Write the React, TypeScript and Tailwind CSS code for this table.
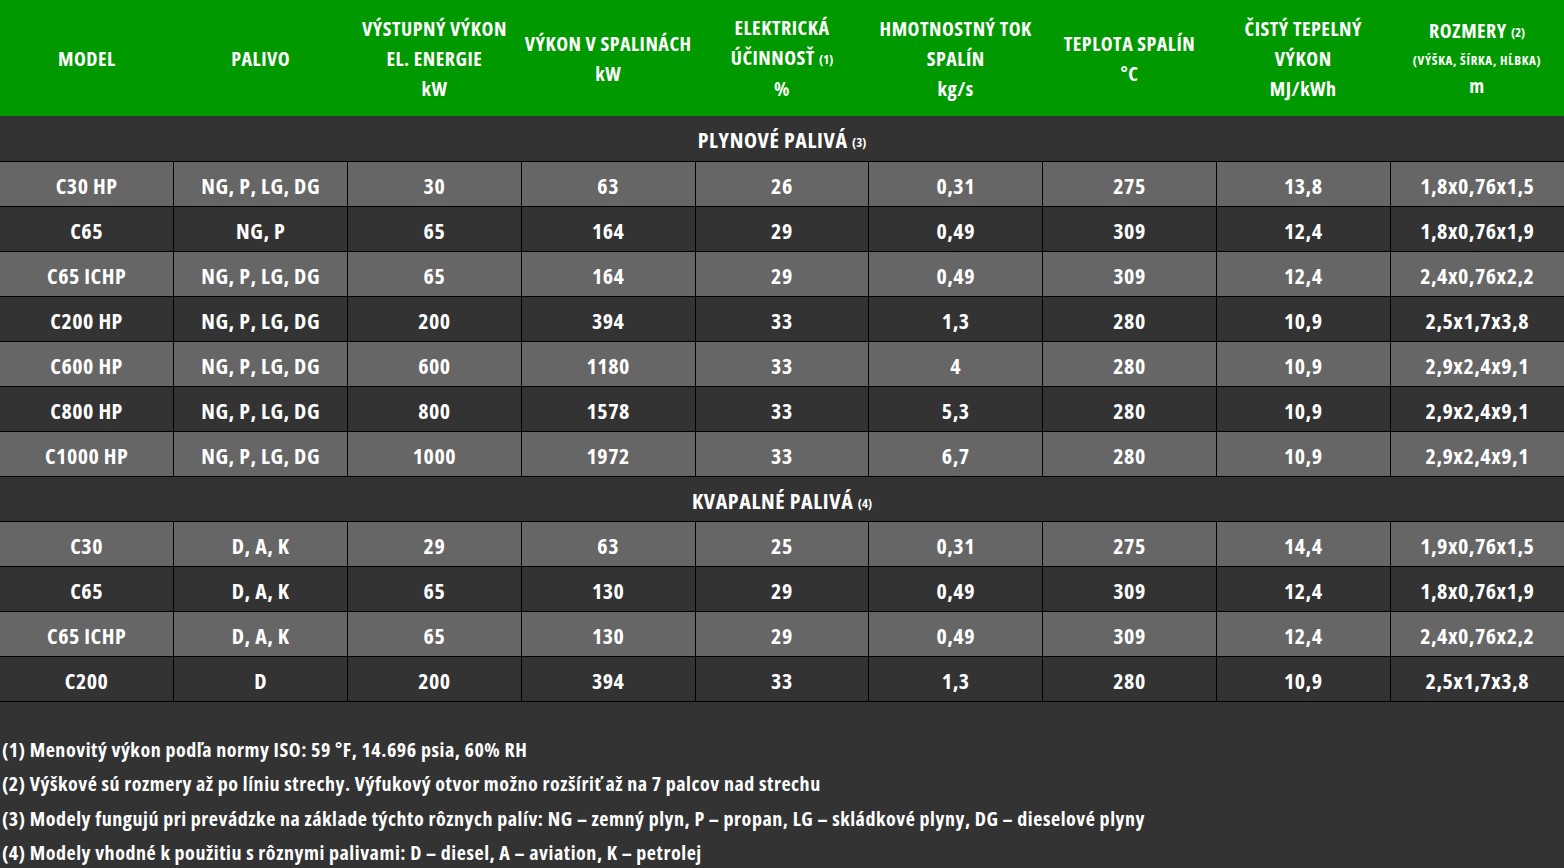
import type { ReactNode } from 'react';

type Row = string[];

const gas: Row[] = [
  ['C30 HP', 'NG, P, LG, DG', '30', '63', '26', '0,31', '275', '13,8', '1,8x0,76x1,5'],
  ['C65', 'NG, P', '65', '164', '29', '0,49', '309', '12,4', '1,8x0,76x1,9'],
  ['C65 ICHP', 'NG, P, LG, DG', '65', '164', '29', '0,49', '309', '12,4', '2,4x0,76x2,2'],
  ['C200 HP', 'NG, P, LG, DG', '200', '394', '33', '1,3', '280', '10,9', '2,5x1,7x3,8'],
  ['C600 HP', 'NG, P, LG, DG', '600', '1180', '33', '4', '280', '10,9', '2,9x2,4x9,1'],
  ['C800 HP', 'NG, P, LG, DG', '800', '1578', '33', '5,3', '280', '10,9', '2,9x2,4x9,1'],
  ['C1000 HP', 'NG, P, LG, DG', '1000', '1972', '33', '6,7', '280', '10,9', '2,9x2,4x9,1'],
];

const liquid: Row[] = [
  ['C30', 'D, A, K', '29', '63', '25', '0,31', '275', '14,4', '1,9x0,76x1,5'],
  ['C65', 'D, A, K', '65', '130', '29', '0,49', '309', '12,4', '1,8x0,76x1,9'],
  ['C65 ICHP', 'D, A, K', '65', '130', '29', '0,49', '309', '12,4', '2,4x0,76x2,2'],
  ['C200', 'D', '200', '394', '33', '1,3', '280', '10,9', '2,5x1,7x3,8'],
];

const Sup = ({ children }: { children: ReactNode }) => (
  <span className="text-[13px] tracking-normal align-[1px]">{children}</span>
);

const headers: ReactNode[] = [
  'MODEL',
  'PALIVO',
  <>VÝSTUPNÝ VÝKON<br />EL. ENERGIE<br />kW</>,
  <>VÝKON V SPALINÁCH<br />kW</>,
  <>ELEKTRICKÁ<br />ÚČINNOSŤ <Sup>(1)</Sup><br />%</>,
  <>HMOTNOSTNÝ TOK<br />SPALÍN<br />kg/s</>,
  <>TEPLOTA SPALÍN<br />°C</>,
  <>ČISTÝ TEPELNÝ<br />VÝKON<br />MJ/kWh</>,
  <div className="leading-[26px]">
    ROZMERY <Sup>(2)</Sup><br />
    <span className="text-[13px] tracking-[0.7px]">(VÝŠKA, ŠÍRKA, HĹBKA)</span><br />
    m
  </div>,
];

function DataRows({ rows }: { rows: Row[] }) {
  return (
    <>
      {rows.map((r, i) => (
        <tr key={i} className={i % 2 === 0 ? 'bg-[#666666]' : 'bg-[#333333]'}>
          {r.map((c, j) => (
            <td
              key={j}
              className="h-[45px] border border-black p-0 pt-[3px] text-center text-[22px] tracking-[0.5px] first:border-l-0 last:border-r-0"
            >
              {c}
            </td>
          ))}
        </tr>
      ))}
    </>
  );
}

function Section({ children }: { children: ReactNode }) {
  return (
    <tr>
      <td colSpan={9} className="h-[45px] border-x-0 p-0 pt-[3px] text-center text-[22px] tracking-[0.6px]">
        {children}
      </td>
    </tr>
  );
}

export default function App() {
  return (
    <div className="min-h-[868px] bg-[#333333] font-['Open_Sans',sans-serif] font-bold text-white [font-stretch:75%]">
      <table className="w-full table-fixed border-collapse">
        <thead>
          <tr className="bg-[#009900]">
            {headers.map((h, i) => (
              <th key={i} className="h-[116px] p-0 pt-[1px] text-center text-[20px] font-bold leading-[30px] tracking-[0.5px]">
                {h}
              </th>
            ))}
          </tr>
        </thead>
        <tbody>
          <Section>PLYNOVÉ PALIVÁ <Sup>(3)</Sup></Section>
          <DataRows rows={gas} />
          <Section>KVAPALNÉ PALIVÁ <Sup>(4)</Sup></Section>
          <DataRows rows={liquid} />
        </tbody>
      </table>
      <div className="mt-[31px] pl-[2px] text-[20px] leading-[34.5px] tracking-[0.55px]">
        <p>(1) Menovitý výkon podľa normy ISO: 59 °F, 14.696 psia, 60% RH</p>
        <p>(2) Výškové sú rozmery až po líniu strechy. Výfukový otvor možno rozšíriť až na 7 palcov nad strechu</p>
        <p>(3) Modely fungujú pri prevádzke na základe týchto rôznych palív: NG – zemný plyn, P – propan, LG – skládkové plyny, DG – dieselové plyny</p>
        <p>(4) Modely vhodné k použitiu s rôznymi palivami: D – diesel, A – aviation, K – petrolej</p>
      </div>
    </div>
  );
}
